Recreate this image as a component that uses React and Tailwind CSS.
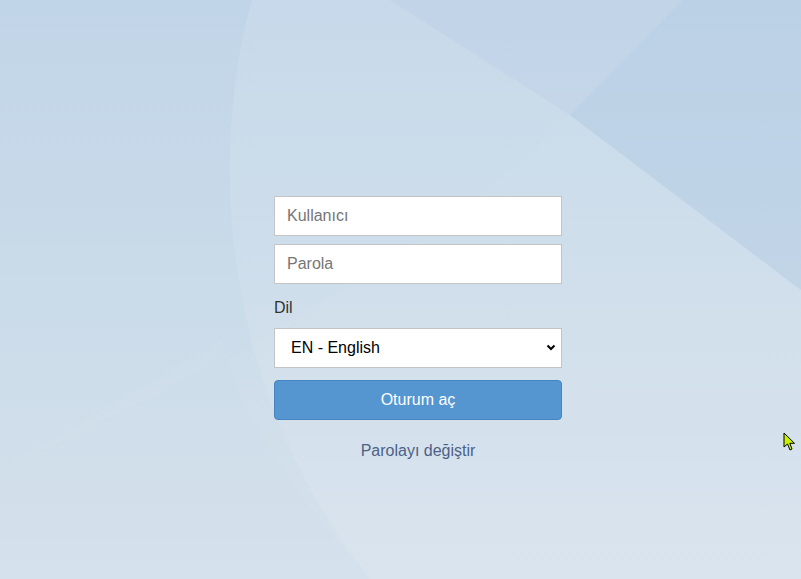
import React from "react";

function Background() {
  return (
    <svg
      className="absolute inset-0 w-full h-full"
      viewBox="0 0 801 579"
      preserveAspectRatio="none"
    >
      <defs>
        <linearGradient id="bg" x1="0" y1="0" x2="0" y2="1">
          <stop offset="0" stopColor="#c1d5e8" />
          <stop offset="0.5" stopColor="#cadbe9" />
          <stop offset="1" stopColor="#d5e1ec" />
        </linearGradient>
      </defs>
      <rect x="0" y="0" width="801" height="579" fill="url(#bg)" />
      <path
        d="M252,0 C212,140 212,380 370,579 L801,579 L801,0 Z"
        fill="#ffffff"
        opacity="0.1"
      />
      <path
        d="M0,470 C130,410 300,330 480,195 L570,115 L801,290 L801,579 L370,579 C300,500 240,420 222,340 C150,380 70,430 0,470 Z"
        fill="#ffffff"
        opacity="0.03"
      />
      <path
        d="M390,0 L570,115 L801,290 L801,0 Z"
        fill="#9fbedc"
        opacity="0.15"
      />
      <path
        d="M683,0 L570,115 L801,290 L801,0 Z"
        fill="#9fbedc"
        opacity="0.14"
      />
    </svg>
  );
}

function Cursor() {
  return (
    <svg
      className="absolute left-[783px] top-[432px]"
      width="14"
      height="20"
      viewBox="0 0 14 20"
    >
      <path
        d="M1,1 L1,15 L4.5,12 L7,18 L9,17 L6.8,11.3 L11.5,11.3 Z"
        fill="#c8f000"
        stroke="#000"
        strokeWidth="1"
        strokeLinejoin="miter"
      />
    </svg>
  );
}

export default function App() {
  return (
    <div
      className="relative w-[801px] h-[579px] overflow-hidden"
      style={{ fontFamily: '"Liberation Sans", Arial, sans-serif' }}
    >
      <Background />
      <div className="relative pt-[196px] pl-[274px]">
        <div className="w-[288px] flex flex-col">
          <input
            type="text"
            placeholder="Kullanıcı"
            className="h-[40px] w-full bg-white border border-[#c4c4c4] pl-3 text-[16px] text-[#333] placeholder:text-[#767676] outline-none"
          />
          <input
            type="password"
            placeholder="Parola"
            className="mt-2 h-[40px] w-full bg-white border border-[#c4c4c4] pl-3 text-[16px] text-[#333] placeholder:text-[#767676] outline-none"
          />
          <label className="mt-[14px] h-[20px] leading-[20px] text-[16px] text-[#333]">
            Dil
          </label>
          <div className="relative mt-[10px]">
            <select
              defaultValue="en"
              className="appearance-none h-[40px] w-full bg-white border border-[#c4c4c4] pl-4 text-[16px] text-black outline-none"
            >
              <option value="en">EN - English</option>
              <option value="tr">TR - Türkçe</option>
            </select>
            <svg
              className="absolute right-[6px] top-[16px] pointer-events-none"
              width="10"
              height="8"
              viewBox="0 0 10 8"
            >
              <path
                d="M1.5,1.5 L5,5 L8.5,1.5"
                fill="none"
                stroke="#000"
                strokeWidth="2"
              />
            </svg>
          </div>
          <button className="mt-3 h-[40px] w-full rounded-[4px] bg-[#5596d0] border border-[#4584c2] text-white text-[16px]">
            Oturum aç
          </button>
          <a
            href="#"
            className="mt-[21px] h-[20px] leading-[20px] text-center text-[16px] text-[#4b6186]"
          >
            Parolayı değiştir
          </a>
        </div>
      </div>
      <Cursor />
    </div>
  );
}
